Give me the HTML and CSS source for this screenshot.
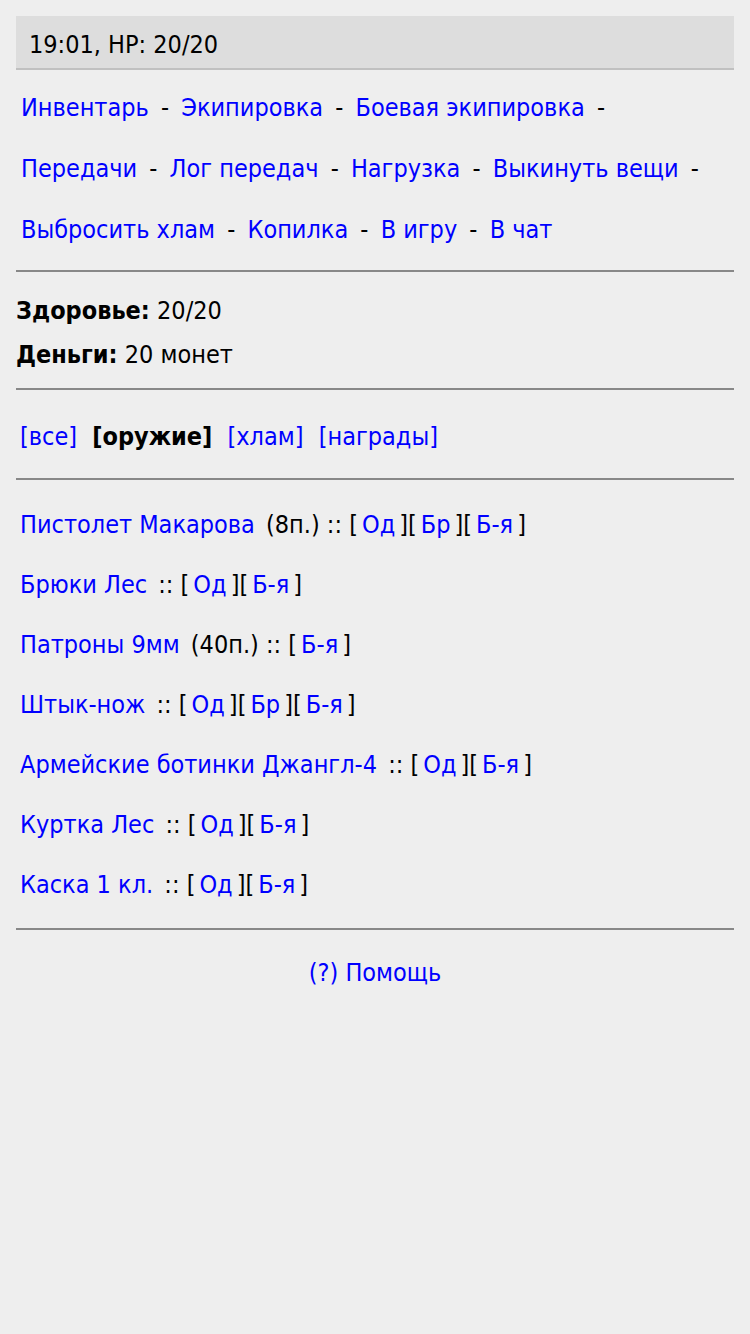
FILE: index.html
```html
<!DOCTYPE html>
<html lang="ru">
<head>
  <meta charset="UTF-8" />
  <meta name="viewport" content="width=device-width, initial-scale=1.0"/>
  <title>Инвентарь</title>
  <link rel="stylesheet" href="styles.css">
</head>
<body>

<div class="head">19:01, HP: 20/20</div>

<div class="menu">
  <a href="#">Инвентарь</a> - <a href="#">Экипировка</a> - <a href="#">Боевая экипировка</a> -<br>
  <a href="#">Передачи</a> - <a href="#">Лог передач</a> - <a href="#">Нагрузка</a> - <a href="#">Выкинуть вещи</a> -<br>
  <a href="#">Выбросить хлам</a> - <a href="#">Копилка</a> - <a href="#">В игру</a> - <a href="#">В чат</a>
</div>

<hr>

<div class="stats">
  <div><b>Здоровье:</b> 20/20</div>
  <div><b>Деньги:</b> 20 монет</div>
</div>

<hr>

<div class="filter">
  <a href="#">[все]</a> <b class="cur">[оружие]</b> <a href="#">[хлам]</a> <a href="#">[награды]</a>
</div>

<hr>

<div class="things">
  <div class="thing"><a href="#">Пистолет Макарова</a> (8п.) :: [<a href="#">Од</a>][<a href="#">Бр</a>][<a href="#">Б-я</a>]</div>
  <div class="thing"><a href="#">Брюки Лес</a> :: [<a href="#">Од</a>][<a href="#">Б-я</a>]</div>
  <div class="thing"><a href="#">Патроны 9мм</a> (40п.) :: [<a href="#">Б-я</a>]</div>
  <div class="thing"><a href="#">Штык-нож</a> :: [<a href="#">Од</a>][<a href="#">Бр</a>][<a href="#">Б-я</a>]</div>
  <div class="thing"><a href="#">Армейские ботинки Джангл-4</a> :: [<a href="#">Од</a>][<a href="#">Б-я</a>]</div>
  <div class="thing"><a href="#">Куртка Лес</a> :: [<a href="#">Од</a>][<a href="#">Б-я</a>]</div>
  <div class="thing"><a href="#">Каска 1 кл.</a> :: [<a href="#">Од</a>][<a href="#">Б-я</a>]</div>
</div>

<hr>

<div class="help"><a href="#">(?) Помощь</a></div>

</body>
</html>
```

FILE: styles.css
```css
body {
  margin: 16px;
  background: #eee;
  color: #000;
  font-family: Tahoma, "DejaVu Sans Condensed", "DejaVu Sans", sans-serif;
  font-size: 25px;
}

a {
  color: #00f;
  text-decoration: none;
  padding: 0 4px;
  white-space: nowrap;
}

hr {
  border: none;
  height: 2px;
  background: #888;
  margin: 0;
}

.head {
  background: #ddd;
  border-bottom: 2px solid #c0c0c0;
  height: 52px;
  line-height: 58px;
  padding-left: 13px;
}

.menu {
  line-height: 61px;
  padding: 7px 0 10px;
}

.menu a {
  padding: 0 5px;
}

.stats {
  line-height: 44px;
  padding: 17px 0 11px;
}

.filter {
  line-height: 44px;
  padding: 25px 0 19px;
}

.cur {
  padding: 0 4px;
}

.things {
  padding: 15px 0 13px;
}

.thing {
  line-height: 60px;
}

.help {
  text-align: center;
  line-height: 44px;
  padding-top: 21px;
}
```
